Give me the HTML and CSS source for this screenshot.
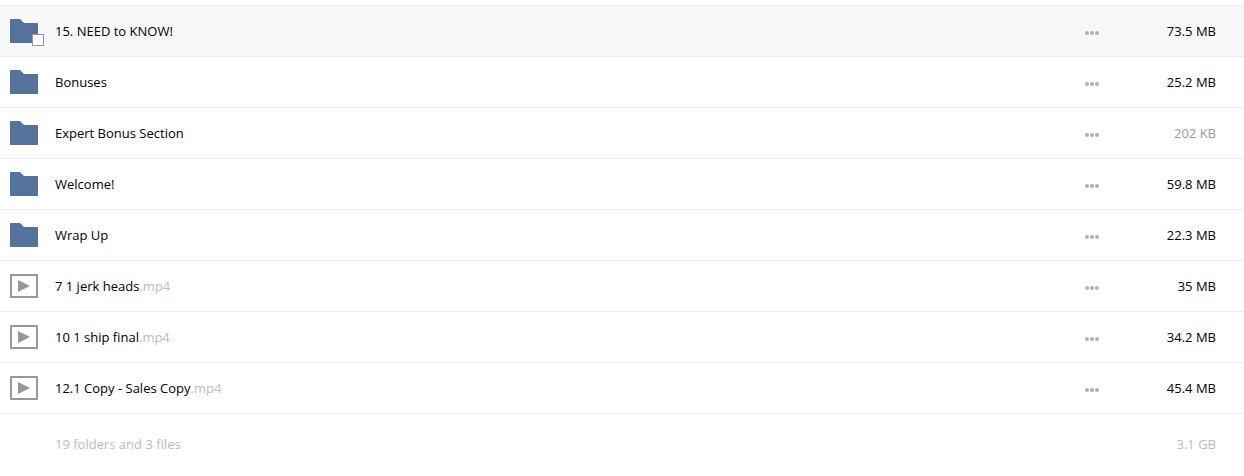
FILE: index.html
```html
<!DOCTYPE html>
<html lang="en">
<head>
<meta charset="utf-8">
<meta name="viewport" content="width=device-width, initial-scale=1">
<title>Files</title>
<link rel="stylesheet" href="styles.css">
</head>
<body>
<svg class="sprite" aria-hidden="true">
  <symbol id="folder" viewBox="0 0 28 24"><path fill="#54729b" d="M.5 0H10L14 4H27.500L28 4.500V23.500L27.500 24H.5L0 23.500V.5Z"/></symbol>
  <symbol id="video" viewBox="0 0 28 24"><path fill="none" stroke="#979797" stroke-width="2" d="M1 1H27V23H1Z"/><path fill="#979797" d="M8 6L20 12L8 18Z"/></symbol>
  <symbol id="dots" viewBox="0 0 14 4"><g fill="#b0b0b0"><circle cx="2" cy="2" r="2"/><circle cx="7" cy="2" r="2"/><circle cx="12" cy="2" r="2"/></g></symbol>
</svg>
<main>
<table class="files">
  <tbody>
    <tr class="row active">
      <td class="kind"><div class="thumb"><svg class="icon"><use href="#folder"/></svg><input class="pick" type="checkbox" aria-label="Select 15. NEED to KNOW!"></div></td>
      <td class="name"><a href="#">15. NEED to KNOW!</a></td>
      <td class="actions"><button class="more" type="button" aria-label="More actions"><svg class="dots"><use href="#dots"/></svg></button></td>
      <td class="size">73.5 MB</td>
    </tr>
    <tr class="row">
      <td class="kind"><div class="thumb"><svg class="icon"><use href="#folder"/></svg></div></td>
      <td class="name"><a href="#">Bonuses</a></td>
      <td class="actions"><button class="more" type="button" aria-label="More actions"><svg class="dots"><use href="#dots"/></svg></button></td>
      <td class="size">25.2 MB</td>
    </tr>
    <tr class="row">
      <td class="kind"><div class="thumb"><svg class="icon"><use href="#folder"/></svg></div></td>
      <td class="name"><a href="#">Expert Bonus Section</a></td>
      <td class="actions"><button class="more" type="button" aria-label="More actions"><svg class="dots"><use href="#dots"/></svg></button></td>
      <td class="size small">202 KB</td>
    </tr>
    <tr class="row">
      <td class="kind"><div class="thumb"><svg class="icon"><use href="#folder"/></svg></div></td>
      <td class="name"><a href="#">Welcome!</a></td>
      <td class="actions"><button class="more" type="button" aria-label="More actions"><svg class="dots"><use href="#dots"/></svg></button></td>
      <td class="size">59.8 MB</td>
    </tr>
    <tr class="row">
      <td class="kind"><div class="thumb"><svg class="icon"><use href="#folder"/></svg></div></td>
      <td class="name"><a href="#">Wrap Up</a></td>
      <td class="actions"><button class="more" type="button" aria-label="More actions"><svg class="dots"><use href="#dots"/></svg></button></td>
      <td class="size">22.3 MB</td>
    </tr>
    <tr class="row">
      <td class="kind"><div class="thumb"><svg class="icon"><use href="#video"/></svg></div></td>
      <td class="name"><a href="#">7 1 jerk heads<span class="ext">.mp4</span></a></td>
      <td class="actions"><button class="more" type="button" aria-label="More actions"><svg class="dots"><use href="#dots"/></svg></button></td>
      <td class="size">35 MB</td>
    </tr>
    <tr class="row">
      <td class="kind"><div class="thumb"><svg class="icon"><use href="#video"/></svg></div></td>
      <td class="name"><a href="#">10 1 ship final<span class="ext">.mp4</span></a></td>
      <td class="actions"><button class="more" type="button" aria-label="More actions"><svg class="dots"><use href="#dots"/></svg></button></td>
      <td class="size">34.2 MB</td>
    </tr>
    <tr class="row">
      <td class="kind"><div class="thumb"><svg class="icon"><use href="#video"/></svg></div></td>
      <td class="name"><a href="#">12.1 Copy - Sales Copy<span class="ext">.mp4</span></a></td>
      <td class="actions"><button class="more" type="button" aria-label="More actions"><svg class="dots"><use href="#dots"/></svg></button></td>
      <td class="size">45.4 MB</td>
    </tr>
  </tbody>
  <tfoot>
    <tr class="total">
      <td class="kind"></td>
      <td class="name">19 folders and 3 files</td>
      <td class="actions"></td>
      <td class="size">3.1 GB</td>
    </tr>
  </tfoot>
</table>
</main>
</body>
</html>
```

FILE: styles.css
```css
body {
  margin: 0;
  background: #fff;
  color: #000;
  font: 13px/18px "Open Sans", "Noto Sans", sans-serif;
}

.sprite {
  display: none;
}

main {
  padding-top: 5px;
}

.files {
  width: 100%;
  border-spacing: 0;
  border-top: 1px solid #ececec;
}

.files td {
  padding: 0;
  vertical-align: middle;
}

.row td {
  height: 50px;
  border-bottom: 1px solid #ececec;
}

.active td {
  background: #f8f8f8;
}

.files .kind {
  width: 45px;
  padding-left: 10px;
}

.thumb {
  position: relative;
  width: 28px;
}

.icon {
  display: block;
  width: 28px;
  height: 24px;
}

.pick {
  position: absolute;
  right: -6px;
  bottom: -3px;
  box-sizing: border-box;
  width: 12px;
  height: 12px;
  margin: 0;
  appearance: none;
  background: #fff;
  border: 1px solid #979797;
}

.pick:checked {
  background: #54729b;
}

.name a {
  color: inherit;
  text-decoration: none;
}

.ext {
  color: #bbb;
}

.actions {
  width: 28px;
}

.more {
  display: block;
  padding: 11px 7px 7px;
  border: 0;
  background: none;
  cursor: pointer;
}

.dots {
  display: block;
  width: 14px;
  height: 4px;
}

.files .size {
  width: 110px;
  padding-right: 28px;
  text-align: right;
  white-space: nowrap;
}

.files .small {
  color: #999;
}

.total td {
  height: 60px;
  color: #bbb;
}
```
